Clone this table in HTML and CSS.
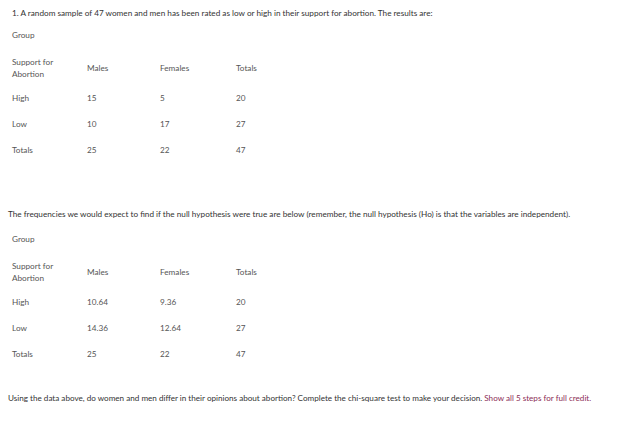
FILE: index.html
```html
<!DOCTYPE html>
<html>
<head>
<meta charset="utf-8">
<link rel="stylesheet" href="styles.css">
</head>
<body>
<div class="page">
  <p class="intro">1. A random sample of 47 women and men has been rated as low or high in their support for abortion. The results are:</p>
  <div class="tbl">
    <div class="group">Group</div>
    <div class="row head"><div class="c0">Support for<br>Abortion</div><div class="c1">Males</div><div class="c2">Females</div><div class="c3">Totals</div></div>
    <div class="row"><div class="c0">High</div><div class="c1">15</div><div class="c2">5</div><div class="c3">20</div></div>
    <div class="row"><div class="c0">Low</div><div class="c1">10</div><div class="c2">17</div><div class="c3">27</div></div>
    <div class="row"><div class="c0">Totals</div><div class="c1">25</div><div class="c2">22</div><div class="c3">47</div></div>
  </div>
  <p class="para p2">The frequencies we would expect to find if the null hypothesis were true are below (remember, the null hypothesis (Ho) is that the variables are independent).</p>
  <div class="tbl">
    <div class="group g2">Group</div>
    <div class="row head"><div class="c0">Support for<br>Abortion</div><div class="c1">Males</div><div class="c2">Females</div><div class="c3">Totals</div></div>
    <div class="row"><div class="c0">High</div><div class="c1">10.64</div><div class="c2">9.36</div><div class="c3">20</div></div>
    <div class="row"><div class="c0">Low</div><div class="c1">14.36</div><div class="c2">12.64</div><div class="c3">27</div></div>
    <div class="row"><div class="c0">Totals</div><div class="c1">25</div><div class="c2">22</div><div class="c3">47</div></div>
  </div>
  <p class="para p3">Using the data above, do women and men differ in their opinions about abortion? Complete the chi-square test to make your decision. <span class="red">Show all 5 steps for full credit.</span></p>
</div>
</body>
</html>
```
FILE: styles.css
```css
html, body { margin: 0; padding: 0; background: #fff; }
body { font-family: Lato, "Open Sans", sans-serif; font-size: 8.2px; color: #333; }
.page { padding: 0 8px; }
p { margin: 0; }
.intro { padding: 8px 4px 0; line-height: 10px; }
.tbl { padding-left: 4px; color: #555; }
.group { margin-top: 12px; line-height: 10px; }
.group.g2 { margin-top: 15px; }
.row { display: flex; align-items: center; height: 26px; }
.row.head { margin-top: 11px; height: 34px; line-height: 12px; }
.c0 { width: 75px; }
.c1 { width: 73px; }
.c2 { width: 76px; }
.p2 { margin-top: 46px; line-height: 10px; }
.p3 { margin-top: 26px; line-height: 10px; font-size: 8.12px; }
.red { color: #8c2c55; }
```
